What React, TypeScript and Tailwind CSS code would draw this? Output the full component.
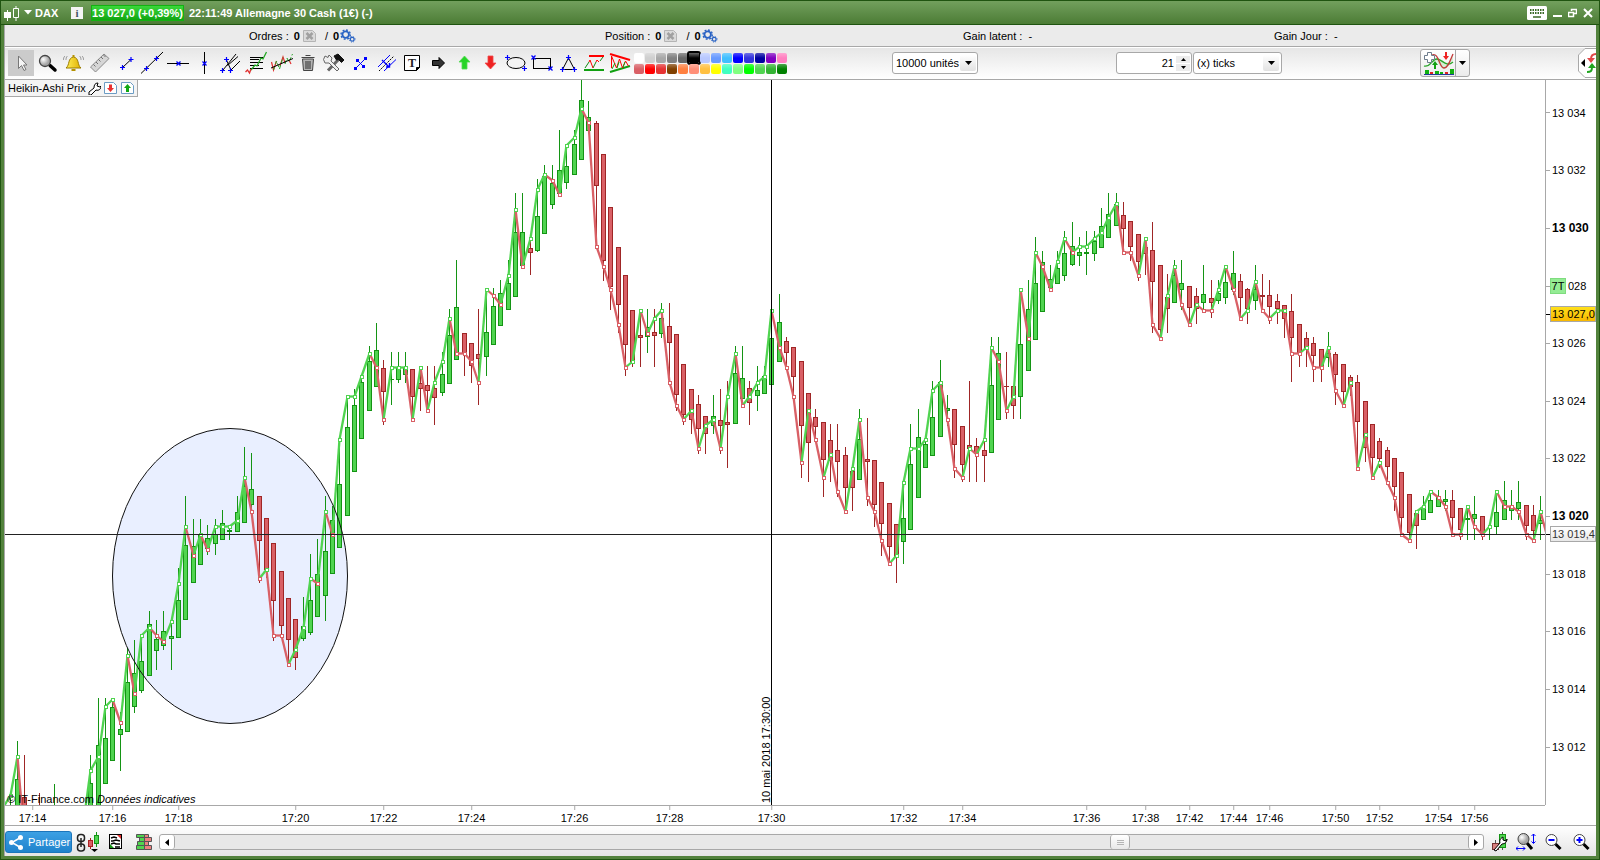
import React from 'react';

// One candle: [high, bodyTop, bodyBottom, low, close, up]
type Candle = [number, number, number, number, number, 0 | 1];

const PLOT = { x: 5, y: 80, w: 1540, h: 725 };
const STEP = 7.3238;
const ORIGIN = 98.05;

const opening: Record<number, Candle> = {
  [-13]: [812, 820, 830, 830, 808, 1],
  [-12]: [797, 812, 830, 830, 795, 1],
  [-11]: [741, 779, 812, 812, 756, 1],
  [-10]: [755, 797, 812, 812, 840, 0],
  [-8]: [793, 812, 820, 820, 850, 0],
  [-6]: [784, 812, 820, 820, 850, 1],
  [-2]: [812, 812, 820, 820, 822, 1],
  [-1]: [755, 783, 812, 812, 770, 1],
};

const series: Candle[] = [
  [698, 745, 812, 812, 756, 1], [698, 738, 783, 783, 706, 1], [699, 707, 760, 760, 699, 1], [712, 729, 734, 770, 722, 1],
  [648, 682, 731, 731, 655, 1], [640, 673, 706, 712, 693, 1], [635, 661, 690, 692, 635, 1], [611, 624, 675, 675, 627, 1],
  [620, 639, 650, 669, 635, 1], [611, 631, 645, 649, 641, 1], [621, 636, 638, 669, 621, 1], [568, 600, 637, 637, 583, 1],
  [496, 545, 619, 619, 526, 1], [519, 546, 582, 582, 555, 1], [519, 534, 564, 564, 534, 1], [525, 538, 548, 554, 549, 1],
  [519, 534, 543, 554, 526, 1], [510, 523, 539, 539, 526, 1], [525, 530, 531, 539, 526, 1], [496, 512, 531, 531, 520, 1],
  [447, 486, 522, 522, 477, 1], [453, 489, 504, 511, 511, 1], [496, 496, 540, 582, 578, 0], [518, 518, 569, 577, 569, 0],
  [543, 543, 600, 640, 635, 0], [571, 571, 625, 636, 635, 0], [598, 598, 639, 664, 664, 0], [619, 619, 657, 669, 649, 0],
  [597, 626, 638, 640, 627, 1], [554, 600, 632, 634, 578, 1], [539, 574, 616, 616, 583, 1], [496, 551, 595, 620, 511, 1],
  [506, 520, 573, 573, 534, 1], [439, 484, 547, 547, 439, 1], [396, 427, 515, 515, 396, 1], [389, 405, 471, 471, 396, 1],
  [375, 382, 438, 438, 376, 1], [346, 361, 410, 410, 353, 1], [323, 350, 386, 386, 367, 1], [360, 368, 391, 424, 419, 0],
  [352, 379, 379, 404, 367, 1], [352, 367, 379, 382, 367, 1], [352, 367, 374, 382, 367, 1], [369, 369, 396, 419, 419, 0],
  [367, 383, 388, 410, 367, 0], [366, 385, 390, 410, 410, 0], [366, 388, 397, 424, 382, 0], [352, 374, 392, 395, 361, 1],
  [309, 335, 383, 383, 318, 1], [260, 307, 359, 359, 353, 1], [333, 333, 353, 375, 353, 0], [343, 343, 365, 382, 361, 0],
  [309, 354, 358, 404, 382, 0], [289, 332, 356, 375, 289, 1], [288, 306, 344, 344, 295, 1], [280, 293, 325, 325, 304, 1],
  [260, 283, 309, 309, 275, 1], [193, 232, 296, 296, 209, 1], [193, 232, 265, 265, 266, 1], [238, 248, 252, 274, 238, 0],
  [179, 216, 250, 251, 189, 1], [165, 176, 233, 233, 174, 1], [165, 183, 204, 208, 180, 1], [130, 170, 193, 193, 194, 1],
  [145, 166, 182, 188, 145, 1], [130, 144, 174, 174, 137, 1], [70, 100, 159, 159, 108, 1], [101, 117, 130, 130, 122, 1],
  [121, 123, 185, 246, 246, 0], [154, 154, 260, 280, 266, 0], [207, 207, 286, 309, 289, 0], [247, 247, 304, 332, 324, 0],
  [275, 275, 344, 375, 367, 0], [310, 310, 361, 366, 361, 0], [310, 335, 337, 366, 310, 0], [309, 327, 336, 352, 333, 1],
  [309, 332, 335, 366, 318, 0], [303, 318, 333, 337, 310, 1], [303, 326, 342, 382, 382, 0], [334, 334, 394, 410, 405, 0],
  [364, 364, 414, 424, 419, 0], [389, 389, 419, 433, 410, 0], [395, 404, 428, 453, 448, 0], [416, 416, 433, 453, 425, 0],
  [395, 416, 425, 433, 419, 1], [389, 420, 425, 453, 448, 0], [381, 422, 424, 467, 396, 0], [346, 373, 423, 423, 353, 1],
  [346, 378, 398, 398, 405, 1], [381, 388, 402, 424, 396, 0], [366, 390, 395, 410, 382, 1], [366, 376, 393, 393, 376, 1],
  [310, 338, 384, 384, 310, 1], [294, 322, 361, 361, 347, 1], [337, 341, 352, 367, 367, 0], [347, 347, 376, 396, 396, 0],
  [361, 361, 425, 477, 462, 0], [393, 393, 442, 481, 410, 0], [409, 417, 426, 439, 439, 0], [422, 422, 459, 496, 477, 0],
  [424, 440, 460, 481, 454, 0], [424, 450, 461, 496, 491, 0], [447, 455, 487, 511, 511, 0], [471, 471, 487, 510, 468, 0],
  [409, 439, 479, 479, 419, 1], [418, 459, 461, 505, 497, 0], [460, 460, 504, 526, 511, 0], [482, 482, 523, 555, 540, 0],
  [503, 503, 546, 563, 563, 0], [524, 524, 557, 582, 555, 0], [482, 518, 541, 563, 482, 1], [424, 464, 529, 529, 448, 1],
  [409, 437, 497, 497, 448, 1], [435, 444, 467, 467, 439, 1], [381, 417, 455, 455, 390, 1], [360, 382, 436, 436, 382, 1],
  [395, 408, 410, 425, 419, 1], [409, 409, 444, 477, 468, 0], [426, 426, 464, 481, 477, 0], [381, 445, 448, 481, 448, 0],
  [438, 446, 453, 481, 454, 0], [439, 450, 455, 481, 439, 0], [337, 385, 452, 452, 347, 1], [337, 353, 419, 419, 361, 1],
  [352, 386, 386, 418, 410, 0], [386, 386, 405, 418, 396, 0], [289, 344, 396, 418, 289, 1], [280, 309, 370, 370, 338, 1],
  [237, 283, 339, 339, 252, 1], [251, 262, 311, 311, 266, 1], [265, 279, 287, 287, 289, 1], [251, 268, 283, 283, 261, 1],
  [231, 253, 275, 280, 238, 1], [222, 246, 264, 265, 252, 1], [237, 252, 255, 265, 246, 1], [231, 252, 253, 274, 246, 1],
  [231, 241, 253, 260, 238, 1], [208, 226, 247, 247, 232, 1], [193, 214, 237, 237, 217, 1], [193, 204, 225, 225, 203, 1],
  [202, 215, 228, 252, 252, 0], [221, 221, 246, 260, 252, 0], [234, 234, 261, 280, 275, 0], [238, 247, 253, 274, 238, 0],
  [222, 250, 281, 332, 324, 0], [265, 265, 329, 338, 338, 0], [274, 297, 308, 332, 295, 0], [260, 275, 302, 302, 266, 1],
  [260, 283, 289, 309, 304, 1], [286, 286, 307, 324, 324, 0], [288, 296, 308, 323, 304, 0], [265, 294, 302, 309, 310, 1],
  [280, 298, 302, 317, 310, 0], [280, 293, 300, 303, 289, 1], [266, 282, 297, 303, 266, 1], [251, 273, 289, 294, 289, 1],
  [274, 281, 297, 318, 318, 0], [288, 289, 308, 323, 310, 0], [265, 289, 300, 309, 281, 1], [274, 295, 296, 310, 310, 0],
  [280, 295, 306, 323, 318, 0], [294, 301, 308, 323, 310, 0], [305, 305, 318, 337, 310, 0], [294, 311, 337, 381, 353, 0],
  [324, 324, 353, 366, 353, 0], [332, 338, 347, 366, 347, 0], [337, 343, 355, 381, 367, 0], [349, 349, 366, 381, 367, 0],
  [332, 353, 357, 366, 347, 1], [352, 354, 374, 404, 390, 0], [364, 364, 391, 405, 405, 0], [375, 377, 386, 395, 382, 0],
  [375, 382, 421, 468, 468, 0], [401, 401, 447, 461, 434, 0], [424, 424, 457, 477, 477, 0], [438, 441, 458, 467, 462, 0],
  [447, 450, 466, 482, 482, 0], [458, 458, 486, 510, 497, 0], [472, 472, 517, 534, 534, 0], [494, 494, 532, 540, 540, 0],
  [511, 513, 525, 548, 511, 0], [496, 508, 519, 519, 506, 1], [491, 500, 512, 512, 491, 1], [490, 497, 506, 506, 497, 1],
  [490, 499, 501, 510, 506, 1], [490, 500, 517, 534, 534, 0], [508, 508, 529, 539, 534, 0], [506, 518, 519, 539, 506, 1],
  [496, 514, 518, 539, 526, 1], [516, 516, 533, 539, 534, 0], [526, 534, 534, 539, 526, 1], [491, 512, 526, 533, 491, 1],
  [481, 500, 519, 519, 506, 1], [490, 506, 510, 519, 506, 1], [481, 502, 508, 519, 511, 1], [505, 505, 525, 539, 534, 0],
  [505, 515, 530, 540, 540, 0], [496, 520, 523, 539, 511, 1], [520, 530, 540, 545, 541, 0],
];

const candles = [
  ...Object.keys(opening).map(Number).sort((a, b) => a - b).map((i) => ({ i, c: opening[i] })),
  ...series.map((c, i) => ({ i, c })),
].map(({ i, c }) => ({ x: Math.floor(ORIGIN + i * STEP), c }));

// The close line keeps its colour while the price stays flat
let rising = true;
const closes = candles.map(({ x, c }, k) => {
  const prev = k > 0 ? candles[k - 1].c[4] : c[4];
  if (c[4] !== prev) rising = c[4] < prev;
  return { x, y: c[4], rising };
});

const priceTicks = [
  { label: '13 034', y: 113 }, { label: '13 032', y: 170 }, { label: '13 030', y: 228, strong: true },
  { label: '028', y: 286, badge: '7T' }, { label: '13 026', y: 343 }, { label: '13 024', y: 401 },
  { label: '13 022', y: 458 }, { label: '13 020', y: 516, strong: true }, { label: '13 018', y: 574 },
  { label: '13 016', y: 631 }, { label: '13 014', y: 689 }, { label: '13 012', y: 747 },
];

const timeTicks = [
  { label: '17:14', x: 32 }, { label: '17:16', x: 112 }, { label: '17:18', x: 178 }, { label: '17:20', x: 295 },
  { label: '17:22', x: 383 }, { label: '17:24', x: 471 }, { label: '17:26', x: 574 }, { label: '17:28', x: 669 },
  { label: '17:30', x: 771 }, { label: '17:32', x: 903 }, { label: '17:34', x: 962 }, { label: '17:36', x: 1086 },
  { label: '17:38', x: 1145 }, { label: '17:42', x: 1189 }, { label: '17:44', x: 1233 }, { label: '17:46', x: 1269 },
  { label: '17:50', x: 1335 }, { label: '17:52', x: 1379 }, { label: '17:54', x: 1438 }, { label: '17:56', x: 1474 },
];

const atPrice = (y: number) => ({ top: `${((y - PLOT.y) / PLOT.h) * 100}%` });
const atTime = (x: number) => ({ left: `${((x - PLOT.x + 0.5) / PLOT.w) * 100}%` });

const swatches = [
  '#ffffff', '#cfcfcf', '#a8a8a8', '#808080', '#666666', '#000000', '#b8c8ff', '#6699ff', '#40bfff', '#0000ff', '#3333dd', '#0000a0', '#8000c0', '#ff80c0',
  '#d96066', '#ff0000', '#e63333', '#804000', '#ff8040', '#ff8f78', '#ffc040', '#ffff00', '#40ffc0', '#80ff80', '#00ff00', '#50d450', '#33b333', '#008000',
];

const Plus = ({ x, y }: { x: number; y: number }) => (
  <path d={`M${x - 2.5} ${y}h5M${x} ${y - 2.5}v5`} stroke="#0000ff" strokeWidth="1.2" fill="none" />
);
const Mark = ({ x, y }: { x: number; y: number }) => (
  <path d={`M${x - 2} ${y - 2}l4 4M${x + 2} ${y - 2}l-4 4`} stroke="#0000ff" strokeWidth="1.3" fill="none" />
);
const Dot = ({ x, y }: { x: number; y: number }) => <rect x={x - 1.5} y={y - 1.5} width="3" height="3" fill="#0000ff" />;

const tools: { name: string; icon: React.ReactNode }[] = [
  {
    name: 'Curseur',
    icon: <path d="M10.5 6v12.500l3-3 2.500 5 2-1-2.500-4.500h3.500z" fill="#f5f5f5" stroke="#777" />,
  },
  {
    name: 'Loupe',
    icon: (
      <>
        <path d="M16 15.5l5 4.500" stroke="#000" strokeWidth="3.5" strokeLinecap="round" />
        <circle cx="11" cy="11" r="5.5" fill="url(#lens)" stroke="#444" strokeWidth="1.300" />
      </>
    ),
  },
  {
    name: 'Alarme',
    icon: (
      <>
        <path d="M6 18c4-3 1.500-10 7.500-11 6 1 3.500 8 7.500 11z" fill="url(#gold)" stroke="#9a7c00" />
        <path d="M13.500 5v2M11.500 20h4" stroke="#b59200" strokeWidth="2" />
        <path d="M7.500 6c-1.500 1-1.500 3-1.500 4M5 6c-1.500 1-1.500 3-1.500 4M19.500 6c1.500 1 1.500 3 1.500 4M22 6c1.500 1 1.500 3 1.500 4" fill="none" stroke="#888" strokeWidth=".8" />
      </>
    ),
  },
  {
    name: 'Règle',
    icon: (
      <>
        <path d="M4.500 17L18 4l5 4.500L9.500 22z" fill="#d6d6d6" stroke="#8b8b8b" />
        <path d="M7.500 14.500l2 2M10 12l2 2M12.500 9.500l2 2M15 7l2 2M17.500 5l2 2" stroke="#555" strokeWidth=".8" />
      </>
    ),
  },
  {
    name: 'Segment',
    icon: (<><path d="M10 18l9-8.500" stroke="#000" /><Plus x={10.5} y={17.5} /><Plus x={19} y={9.5} /></>),
  },
  {
    name: 'Droite',
    icon: (<><path d="M3 23.500L25 2" stroke="#000" /><Plus x={8.5} y={18.5} /><Plus x={18.5} y={8.5} /></>),
  },
  {
    name: 'Droite horizontale',
    icon: (<><path d="M3 13.500h22" stroke="#000" /><Mark x={14.5} y={13.5} /></>),
  },
  {
    name: 'Droite verticale',
    icon: (<><path d="M14.500 2v22" stroke="#000" /><Mark x={14.5} y={13.5} /></>),
  },
  {
    name: 'Fourchette',
    icon: (
      <>
        <path d="M7 20L20 4M11.500 15.500L22 6.500M15 20l9-9M10 9l5 11" stroke="#000" />
        <Plus x={10.5} y={9.5} /><Plus x={6.5} y={20.5} /><Plus x={14.5} y={20.5} />
      </>
    ),
  },
  {
    name: 'Fibonacci',
    icon: (
      <>
        <path d="M8 7.500h13M8 9.500h9M8 12.500h13M8 15.500h9M8 18.500h13" stroke="#000" />
        <path d="M9 20l4-5 2 1 4-8 2 1 3.500-7" stroke="#22a822" fill="none" strokeWidth="1.300" />
        <path d="M3.500 22l2-2 2 3 1.500-4" stroke="#e03030" fill="none" strokeWidth="1.300" />
      </>
    ),
  },
  {
    name: 'Régression',
    icon: (
      <>
        <path d="M3.500 12l2 8 3-9M12 16l3-9 2 6M21 10l2 4" stroke="#e03030" fill="none" strokeWidth="1.200" />
        <path d="M5.500 20l3-9 3 8 3.500-12M17 14l2-6 2 4 3.500-8" stroke="#28a428" fill="none" strokeDasharray="4 2" />
        <path d="M3 18L25 8.500" stroke="#000" />
      </>
    ),
  },
  {
    name: 'Supprimer',
    icon: (
      <>
        <path d="M8.500 9h11l-1 11.500h-9z" fill="#b4b4b4" stroke="#444" />
        <path d="M7.500 7.500h13M11.500 5.500h5M12 11v8M14 11v8M16 11v8" stroke="#444" strokeWidth="1.200" />
      </>
    ),
  },
  {
    name: 'Outils',
    icon: (
      <>
        <path d="M8 20.500L19 9" stroke="#666" strokeWidth="3" />
        <path d="M14 6l4-2 6 6-2.500 2.500-3-3-2 .5z" fill="#111" stroke="#111" />
        <path d="M5 6l3 1.500L9 5l3 3-1 3 8 8-2 2-8-8H5L3.500 9.500z" fill="#eee" stroke="#666" />
      </>
    ),
  },
  {
    name: 'Segment libre',
    icon: (<><path d="M9 19L20 8M11 10l7 7" stroke="#0000ff" /><Dot x={9.5} y={18.5} /><Dot x={19.5} y={8.5} /><Dot x={11.5} y={10.5} /><Dot x={17.5} y={16.5} /></>),
  },
  {
    name: 'Canal',
    icon: (
      <>
        <path d="M6 17L18 5M12 21L24 9.500" stroke="#0000ff" />
        <path d="M7 21L22 6" stroke="#000" strokeDasharray="2 1" />
        <path d="M10 10l7 7M17.500 13v4H14" stroke="#0000ff" fill="none" strokeWidth="1.400" />
      </>
    ),
  },
  {
    name: 'Texte',
    icon: (
      <>
        <path d="M6.500 5.500h15v12l-3 3h-12z" fill="#fff" stroke="#000" />
        <path d="M21.500 17.500h-3v3z" fill="#000" stroke="#000" />
        <text x="14" y="17" textAnchor="middle" fontSize="12" fontWeight="bold" fontFamily="Liberation Serif, serif" fill="#222">T</text>
      </>
    ),
  },
  { name: 'Flèche', icon: <path d="M8.500 10.500H15v-3l5.500 5.500-5.500 5.500v-3H8.500z" fill="#333" stroke="#000" /> },
  { name: 'Flèche haut', icon: <path d="M12 19v-7H9l5.500-6 5.500 6h-3v7z" fill="#27d427" stroke="#52dc52" strokeWidth=".8" /> },
  { name: 'Flèche bas', icon: <path d="M12 6v7H9l5.500 6 5.500-6h-3V6z" fill="#ee2222" stroke="#f04848" strokeWidth=".8" /> },
  {
    name: 'Ellipse',
    icon: (<><ellipse cx="14" cy="13" rx="9" ry="5.5" fill="#f4f4f4" stroke="#000" /><Plus x={5.5} y={7.5} /><Plus x={22.5} y={18.5} /></>),
  },
  {
    name: 'Rectangle',
    icon: (<><rect x="5.5" y="8.5" width="17" height="10" fill="#f2f2f2" stroke="#000" /><Mark x={5.5} y={7.5} /><Mark x={22.5} y={18.5} /></>),
  },
  {
    name: 'Triangle',
    icon: (<><path d="M14.500 8l6 11.500h-12z" fill="#f2f2f2" stroke="#000" /><Plus x={14.5} y={7.5} /><Plus x={8.5} y={19.5} /><Plus x={20.5} y={19.5} /></>),
  },
  {
    name: 'Support',
    icon: (
      <>
        <path d="M9 6h15" stroke="#ff0000" strokeWidth="2" /><path d="M4 20h20" stroke="#11a011" strokeWidth="2" />
        <path d="M5 18l4-6M13 18l3-6M20 11l3-4" stroke="#118811" fill="none" />
        <path d="M9 12l1-2 3 8M16 12l1-2 2 2" stroke="#ff0000" fill="none" />
      </>
    ),
  },
  {
    name: 'Triangle auto',
    icon: (
      <>
        <path d="M4 4l20 6" stroke="#ff0000" strokeWidth="2" /><path d="M4 22l20-6" stroke="#11a011" strokeWidth="2" />
        <path d="M5.500 18V6l5 12 3-9 3 9 3-7 3 5" stroke="#ff0000" fill="none" />
        <path d="M6 19l3-6M11 18l2-6M17 17l2-5" stroke="#11a011" fill="none" />
      </>
    ),
  },
];

const Caret = () => (
  <svg width="7" height="4" viewBox="0 0 7 4" className="pointer-events-none"><path d="M0 0h7L3.500 4z" /></svg>
);

const Gears = () => (
  <svg width="16" height="14" viewBox="0 0 17 15" fill="none" stroke="#2862c4">
    <circle cx="6" cy="6" r="3.5" strokeWidth="2" />
    <circle cx="6" cy="6" r="5" strokeWidth="1.5" strokeDasharray="2 1.9" />
    <circle cx="13" cy="11" r="2" strokeWidth="1.3" />
    <circle cx="13" cy="11" r="3" strokeDasharray="1.3 1.1" />
  </svg>
);

const CancelBox = () => (
  <svg width="13" height="12" viewBox="0 0 13 12">
    <path d="M.5.5h9l3 3v8H.5z" fill="#dadada" stroke="#b4b4b4" />
    <path d="M3.500 3l6 6M9.500 3l-6 6" stroke="#a0a0a0" strokeWidth="2.500" />
  </svg>
);

const Counter = ({ label }: { label: string }) => (
  <div className="flex items-center">
    <span>{label} :</span>
    <b className="ml-[5px]">0</b>
    <span className="ml-[3px]"><CancelBox /></span>
    <span className="ml-[9px]">/</span>
    <b className="ml-[5px]">0</b>
    <span className="ml-px"><Gears /></span>
  </div>
);

const PriceChart = () => (
  <svg className="absolute inset-0 w-full h-full" viewBox={`${PLOT.x} ${PLOT.y} ${PLOT.w} ${PLOT.h}`} preserveAspectRatio="none">
    <ellipse cx="230" cy="576" rx="117.5" ry="147.5" fill="#e9efff" />

    {/* Candles */}
    <g shapeRendering="crispEdges">
      {candles.map(({ x, c: [high, top, bottom, low, , up] }) => (
        <g key={x} fill={up ? '#50d450' : '#d96066'} stroke={up ? '#149414' : '#9f2626'}>
          <path d={`M${x + 0.5} ${high}V${low + 1}`} />
          {bottom > top ? (
            <rect x={x - 1.5} y={top + 0.5} width="4" height={bottom - top} />
          ) : (
            <path d={`M${x - 2} ${top + 0.5}h5`} />
          )}
        </g>
      ))}
    </g>

    {/* Close line */}
    {closes.slice(1).map((p, k) => (
      <path
        key={p.x}
        d={`M${closes[k].x + 0.5} ${closes[k].y + 0.5}L${p.x + 0.5} ${p.y + 0.5}`}
        stroke={p.rising ? '#50d450' : '#d96066'}
        strokeWidth="2.3"
      />
    ))}
    <g shapeRendering="crispEdges" fill="#fff">
      {closes.map((p) => (
        <rect key={p.x} x={p.x - 0.5} y={p.y - 0.5} width="3" height="3" stroke={p.rising ? '#50d450' : '#d96066'} />
      ))}
    </g>

    <ellipse cx="230" cy="576" rx="117.5" ry="147.5" fill="none" stroke="#111" />

    {/* Crosshair */}
    <g shapeRendering="crispEdges" stroke="#000">
      <path d="M5 534.500H1545" stroke="#222" />
      <path d="M771.500 80V805" />
    </g>
    <text transform="translate(770 803) rotate(-90)" fontSize="11">10 mai 2018 17:30:00</text>
  </svg>
);

const TitleBar = () => (
  <header className="flex h-6 shrink-0 items-center border-b border-[#1f5410] bg-linear-to-b from-[#72a05d] to-[#4c7c35] pl-[3px] pr-[6px] text-white">
    <svg width="16" height="18" viewBox="0 0 16 18" fill="none" stroke="#fff">
      <path d="M0 8h7v6H0z" fill="#fff" stroke="none" />
      <path d="M3.500 6v11M9.500 4.500h5v9h-5zM12 2v2M12 14v3" />
    </svg>
    <svg width="8" height="5" viewBox="0 0 8 5" className="ml-1" fill="#fff"><path d="M0 0h8L4 4.500z" /></svg>
    <h1 className="ml-[3px] w-9 text-[11px] font-bold">DAX</h1>
    <button aria-label="Informations" className="flex h-3 w-3 items-center justify-center bg-[#f4f4f4] font-['Liberation_Serif',serif] font-bold leading-3 text-[#456]">i</button>
    <span className="ml-2 h-4 w-[93px] whitespace-nowrap border border-[#12b312] bg-linear-to-b from-[#3ad83a] to-[#0fa50f] text-center font-bold leading-[15px]">13 027,0 (+0,39%)</span>
    <span className="ml-[5px] whitespace-nowrap font-bold">22:11:49 Allemagne 30 Cash (1€) (-)</span>
    <div className="ml-auto flex items-center gap-[6px]">
      <button aria-label="Clavier">
        <svg width="20" height="14" viewBox="0 0 20 14">
          <rect width="20" height="14" rx="1.5" fill="#fff" />
          <path d="M3 4h14M3 7h14" stroke="#3b6a26" strokeWidth="2" strokeDasharray="1.500 1" /><path d="M6 11h8" stroke="#3b6a26" strokeWidth="1.500" />
        </svg>
      </button>
      <button aria-label="Réduire">
        <svg width="9" height="12" viewBox="0 0 9 12"><path d="M0 9h9" stroke="#fff" strokeWidth="2" /></svg>
      </button>
      <button aria-label="Restaurer">
        <svg width="9" height="10" viewBox="0 0 9 10" fill="none" stroke="#fff"><path d="M3.500 3V1.500h5v4H6" strokeWidth="1.500" /><path d="M.5 4.500h5v4h-5z" strokeWidth="1.500" /></svg>
      </button>
      <button aria-label="Fermer">
        <svg width="10" height="10" viewBox="0 0 10 10" stroke="#fff" strokeWidth="2"><path d="M1 1l8 8M9 1L1 9" /></svg>
      </button>
    </div>
  </header>
);

const Toolbar = () => (
  <div className="flex h-[33px] shrink-0 items-center border-b border-[#a8a8a8] border-t border-t-white bg-linear-to-b from-[#e6e6e6] to-white pb-px pl-[3px]">
    <div className="flex shrink-0">
      {tools.map((tool, i) => (
        <button key={tool.name} aria-label={tool.name} className={i === 0 ? 'h-[26px] w-[26px] bg-[#cbcbcb]' : 'h-[26px] w-[26px]'}>
          <svg width="26" height="26" viewBox="0 0 26 26" fill="none">{tool.icon}</svg>
        </button>
      ))}
    </div>

    {/* Colours */}
    <div className="ml-[2px] grid shrink-0 grid-cols-14 gap-px">
      {swatches.map((color) => (
        <button
          key={color}
          aria-label={color}
          className={
            color === '#000000'
              ? 'h-[10px] w-[10px] rounded-[1px] bg-linear-to-b from-white/40 to-transparent to-50% outline-2 outline-black'
              : 'h-[10px] w-[10px] rounded-[2px] bg-linear-to-b from-white/30 to-transparent to-50%'
          }
          style={{ backgroundColor: color }}
        />
      ))}
    </div>

    <label className="relative ml-[105px] flex h-[22px] w-[86px] shrink-0 items-center rounded-[3px] border border-[#a8a8a8] bg-white">
      <select aria-label="Unités affichées" className="h-full w-full appearance-none bg-transparent pl-[3px] outline-none">
        <option>10000 unités</option>
      </select>
      <span className="pointer-events-none absolute right-px flex h-4 w-4 items-center justify-center rounded-xs bg-linear-to-b from-white to-[#e2e2e2]"><Caret /></span>
    </label>

    <div className="ml-[138px] flex h-[22px] w-[76px] shrink-0 items-center rounded-[3px] border border-[#a8a8a8] bg-white">
      <input aria-label="Nombre de ticks" defaultValue="21" className="w-[57px] bg-transparent text-right outline-none" />
      <div className="ml-[2px] flex flex-col gap-px">
        <button aria-label="Augmenter" className="flex h-[7px] w-[14px] items-center justify-center bg-[#ececec]">
          <svg width="5" height="3" viewBox="0 0 5 3"><path d="M0 3h5L2.500 0z" /></svg>
        </button>
        <button aria-label="Diminuer" className="flex h-[7px] w-[14px] items-center justify-center bg-[#ececec]">
          <svg width="5" height="3" viewBox="0 0 5 3"><path d="M0 0h5L2.500 3z" /></svg>
        </button>
      </div>
    </div>

    <label className="relative ml-px flex h-[22px] w-[89px] shrink-0 items-center rounded-[3px] border border-[#a8a8a8] bg-white">
      <select aria-label="Unité de temps" className="h-full w-full appearance-none bg-transparent pl-[3px] outline-none">
        <option>(x) ticks</option>
      </select>
      <span className="pointer-events-none absolute right-[2px] flex h-4 w-4 items-center justify-center rounded-xs bg-linear-to-b from-white to-[#e2e2e2]"><Caret /></span>
    </label>

    <div className="ml-[138px] flex h-7 w-[50px] shrink-0 rounded-[3px] border border-[#a8a8a8] bg-linear-to-b from-white to-[#ececec]">
      <button aria-label="Ajouter un indicateur" className="flex w-[35px] items-center justify-center border-r border-[#a8a8a8]">
        <svg width="31" height="24" viewBox="0 0 31 24" fill="none">
          <path d="M1 15c6 2 8-8 13-8s8 7 12 4 3-4 4-7v5c-4 5-7 10-10 9S15 9 11 9s-4 8-10 6z" fill="#d3efd3" />
          <path d="M1 15c6 2 8-7 13-7s9 9 16 3" stroke="#2ba52b" strokeWidth="1.300" />
          <path d="M9 4c7-3 7 13 12 13 4 0 6-7 9-14" stroke="#c23a3a" strokeWidth="1.300" />
          <path d="M4.500 1.500h4v3h3v4h-3v3h-4v-3h-3v-4h3z" fill="#fff" stroke="#6d7c8c" />
          <path d="M11 18v-4H9l3-4 3 4h-2v4z" fill="#12a312" /><path d="M22 1v4h-2l3 4 3-4h-2V1z" fill="#e22" />
          <path d="M2 19h4v4H2zM12 20h4v3h-4zM17 21h3v2h-3zM27 18h4v5h-4z" fill="#10b010" /><path d="M7 21h3v2H7zM22 21h3v2h-3z" fill="#d22" />
          <path d="M1 23.500h30" stroke="#223a9a" />
        </svg>
      </button>
      <button aria-label="Plus d'indicateurs" className="flex flex-1 items-center justify-center"><Caret /></button>
    </div>

    <button aria-label="Ouvrir le panneau" className="ml-auto">
      <svg width="18" height="30" viewBox="0 0 18 30" fill="none">
        <path d="M18.500.5H7L.5 7v16L7 29.500h11.500" fill="#fff" stroke="#a8a8a8" />
        <path d="M7 11v8l-4-4z" fill="#000" />
        <path d="M18 6c-4 0-5 2-5 5" stroke="#e04848" strokeWidth="2" /><path d="M9 10h8l-4 5z" fill="#e04848" />
        <path d="M9 24c4 0 5-1 5-5" stroke="#1fa51f" strokeWidth="2" /><path d="M10 20h8l-4-5z" fill="#1fa51f" />
      </svg>
    </button>
  </div>
);

const Zoom = ({ name, children }: { name: string; children?: React.ReactNode }) => (
  <button aria-label={name}>
    <svg width="20" height="18" viewBox="0 0 20 18" fill="none">
      <path d="M11.500 11l5 5" stroke="#000" strokeWidth="3" />
      <circle cx="7.500" cy="7" r="5.500" fill="#fff" stroke="#444" />
      {children}
    </svg>
  </button>
);

const BottomBar = () => (
  <footer className="flex h-[31px] shrink-0 items-center border-t border-[#a8a8a8] bg-linear-to-b from-white to-[#e4e4e4] pr-1 pt-[2px]">
    <button className="flex h-[22px] w-[67px] shrink-0 items-center gap-[5px] rounded-[3px] border border-[#1b75bb] bg-linear-to-b from-[#3ca0e4] to-[#1f83cc] pl-[3px] text-white">
      <svg width="14" height="15" viewBox="0 0 14 15" fill="#fff">
        <path d="M11.500 2.500L3 7.500l8.500 5" fill="none" stroke="#fff" strokeWidth="1.500" />
        <circle cx="11.500" cy="2.500" r="2.500" /><circle cx="2.500" cy="7.500" r="2.500" /><circle cx="11.500" cy="12.500" r="2.500" />
      </svg>
      Partager
    </button>
    <button aria-label="Lier les graphiques" className="ml-1">
      <svg width="24" height="20" viewBox="0 0 24 20" fill="none">
        <rect x="1.500" y="2.500" width="7" height="7" rx="3" stroke="#222" strokeWidth="1.500" />
        <rect x="1.500" y="12" width="7" height="7" rx="3" stroke="#222" strokeWidth="1.500" />
        <path d="M5 6v9" stroke="#222" strokeWidth="1.500" />
        <path d="M14.500 6v11" stroke="#a22" /><rect x="12.500" y="8.500" width="4" height="6" fill="#d96066" stroke="#a22" />
        <path d="M20.500 0v15" stroke="#149414" /><rect x="18.500" y="3.500" width="4" height="8" fill="#50d450" stroke="#149414" />
        <path d="M15 17h7l-3.500 3z" fill="#000" />
      </svg>
    </button>
    <button aria-label="Données" className="ml-[9px]">
      <svg width="14" height="16" viewBox="0 0 14 16" fill="none">
        <rect x=".5" y=".5" width="12" height="14" fill="#fff" stroke="#000" />
        <path d="M2 4l3-1 3 1M2 7h2l3-1 4 1M2 10l3-1 2 1h4M6 13h5" stroke="#000" strokeWidth="1.500" />
        <path d="M8 1h4v4z" fill="#e03030" /><path d="M1 14v-4l4 4z" fill="#149414" />
      </svg>
    </button>
    <button aria-label="Carnet d'ordres" className="ml-[13px]">
      <svg width="17" height="16" viewBox="0 0 17 16" stroke="#555">
        <path d="M.5.500h8v3h-8zM3.500 3.500h5v4h-5zM1.500 7.500h7v4h-7zM.5 11.500h8v4h-8z" fill="#50d450" />
        <path d="M8.500.5h4v3h-4zM8.500 3.500h7v4h-7zM8.500 7.500h4v4h-4zM8.500 11.500h7v4h-7z" fill="#ee8080" />
      </svg>
    </button>

    {/* Time scroll */}
    <div className="ml-[6px] flex h-4 flex-1 rounded-[3px] border border-[#a8a8a8] bg-[#e8e8e8]">
      <button aria-label="Défiler à gauche" className="flex w-[15px] items-center justify-center rounded-[3px] border-r border-[#a8a8a8] bg-white">
        <svg width="4" height="7" viewBox="0 0 4 7"><path d="M4 0v7L0 3.500z" /></svg>
      </button>
      <div className="flex-[935]" />
      <div className="flex w-5 items-center justify-center rounded-[3px] border-x border-[#a8a8a8] bg-linear-to-b from-white to-[#e8e8e8]">
        <span className="h-[5px] w-[7px] border-y border-[#b5b5b5]"><span className="mt-px block h-px bg-[#b5b5b5]" /></span>
      </div>
      <div className="flex-[338]" />
      <button aria-label="Défiler à droite" className="flex w-[15px] items-center justify-center rounded-[3px] border-l border-[#a8a8a8] bg-white">
        <svg width="4" height="7" viewBox="0 0 4 7"><path d="M0 0v7l4-3.500z" /></svg>
      </button>
    </div>

    <div className="ml-[7px] flex items-center gap-2">
      <button aria-label="Réglages du graphique">
        <svg width="17" height="20" viewBox="0 0 17 20" fill="none">
          <path d="M4.500 8v11M11.500 0v18" stroke="#555" /><rect x="1.500" y="11.500" width="6" height="6" fill="#d98080" stroke="#733" />
          <rect x="8.500" y="2.500" width="6" height="13" fill="#50d450" stroke="#149414" />
          <path d="M3 18l6-7c-1-3 1-5 3-6v3l3 1 1-2c0 3-2 5-5 5l-6 7z" fill="#fff" stroke="#000" />
        </svg>
      </button>
      <button aria-label="Zoom automatique">
        <svg width="20" height="18" viewBox="0 0 20 18" fill="none">
          <path d="M11 10l5 6" stroke="#000" strokeWidth="3" />
          <circle cx="7.500" cy="6" r="5.500" fill="url(#lens)" stroke="#444" />
          <path d="M17.500 1v9M15.500 3l2-2 2 2M15.500 8.500l2 2 2-2M0 15.500h9M2 13.500l-2 2 2 2M7 13.500l2 2-2 2" stroke="#0000ff" />
        </svg>
      </button>
      <Zoom name="Zoom arrière"><path d="M4.500 7h6" stroke="#0000ff" strokeWidth="2" /></Zoom>
      <Zoom name="Zoom avant"><path d="M4.500 7h6M7.500 4v6" stroke="#0000ff" strokeWidth="2" /></Zoom>
    </div>
  </footer>
);

export default function App() {
  return (
    <div className="flex h-screen min-h-[400px] flex-col overflow-hidden border border-[#1f5410] bg-[#52823c] font-['Liberation_Sans',Arial,sans-serif] text-[11px] leading-[14px] text-black">
      <svg width="0" height="0" className="absolute">
        <defs>
          <radialGradient id="lens" cx=".35" cy=".35"><stop offset="0" stopColor="#fff" /><stop offset="1" stopColor="#a5a5a5" /></radialGradient>
          <linearGradient id="gold"><stop offset="0" stopColor="#ffee55" /><stop offset="1" stopColor="#e0b000" /></linearGradient>
        </defs>
      </svg>

      <TitleBar />

      <div className="mx-[3px] mb-[3px] flex min-h-0 flex-1 flex-col border-l border-[#a8a8a8] bg-white">
        <div className="grid h-[22px] shrink-0 grid-cols-[244fr_356fr_358fr_311fr_322fr] items-center whitespace-nowrap border-b border-[#a8a8a8] bg-[#ebebeb]">
          <span />
          <Counter label="Ordres" />
          <Counter label="Position" />
          <span>Gain latent : &nbsp;-</span>
          <span>Gain Jour : &nbsp;-</span>
        </div>

        <Toolbar />

        <div className="grid min-h-0 flex-1 grid-cols-[1fr_51px] grid-rows-[1fr_20px]">
          <div className="relative overflow-hidden">
            <PriceChart />
            <div className="absolute left-0 top-0 flex h-[17px] items-center border-b border-r border-[#a8a8a8] bg-[#f4f4f4] pl-[3px] pr-[3px]">
              Heikin-Ashi Prix
              <button aria-label="Réglages" className="ml-[2px]">
                <svg width="13" height="13" viewBox="0 0 13 13"><path d="M1 10l5-4c0-3 1-5 4-5L9 4l3 1 1-1c0 3-2 5-5 4l-5 5H1z" fill="#fff" stroke="#000" /></svg>
              </button>
              <button aria-label="Descendre" className="ml-[3px]">
                <svg width="13" height="12" viewBox="0 0 13 12"><path d="M.5.500h9l3 3v8H.5z" fill="#fff" stroke="#6c9cc4" /><path d="M5 2.500h3V6h2l-3.500 4L3 6h2z" fill="#e83030" /></svg>
              </button>
              <button aria-label="Monter" className="ml-1">
                <svg width="13" height="12" viewBox="0 0 13 12"><path d="M.5.500h9l3 3v8H.5z" fill="#fff" stroke="#6c9cc4" /><path d="M5 10h3V6h2L6.500 2 3 6h2z" fill="#12a812" /></svg>
              </button>
            </div>
            <p className="absolute -bottom-px left-[2px]">© IT-Finance.com <i>Données indicatives</i></p>
          </div>

          {/* Price axis */}
          <div className="relative border-l border-[#a8a8a8]">
            {priceTicks.map((t) => (
              <div key={t.label} className="absolute left-0 flex -translate-y-1/2 items-center whitespace-nowrap" style={atPrice(t.y)}>
                <span className="h-px w-1 bg-[#a8a8a8]" />
                {t.badge && <span className="h-4 w-4 border border-[#7fdc7f] bg-[#94ec94] text-center">{t.badge}</span>}
                <span className={t.strong ? 'pl-[2px] text-xs font-bold leading-[14px]' : 'pl-[2px]'}>{t.label}</span>
              </div>
            ))}
            <div className="absolute left-0 right-0 flex -translate-y-1/2 items-center" style={atPrice(314)}>
              <span className="h-px w-1 bg-black" />
              <span className="h-4 flex-1 whitespace-nowrap border border-[#a8a8a8] bg-linear-to-b from-[#ffe01a] to-[#f8b800] pl-px">13 027,0</span>
            </div>
            <div className="absolute left-0 right-0 flex -translate-y-1/2 items-center" style={atPrice(534)}>
              <span className="h-px w-1 bg-black" />
              <span className="h-4 flex-1 whitespace-nowrap border border-[#a8a8a8] bg-linear-to-b from-white to-[#e8e8e8] pl-px text-[#333]">13 019,4</span>
            </div>
          </div>

          {/* Time axis */}
          <div className="relative border-t border-[#a8a8a8]">
            {timeTicks.map((t) => (
              <div key={t.label} className="absolute top-0 flex -translate-x-1/2 flex-col items-center gap-px" style={atTime(t.x)}>
                <span className="h-1 w-px bg-[#a8a8a8]" />
                <span>{t.label}</span>
              </div>
            ))}
          </div>
          <div />
        </div>

        <BottomBar />
      </div>
    </div>
  );
}
